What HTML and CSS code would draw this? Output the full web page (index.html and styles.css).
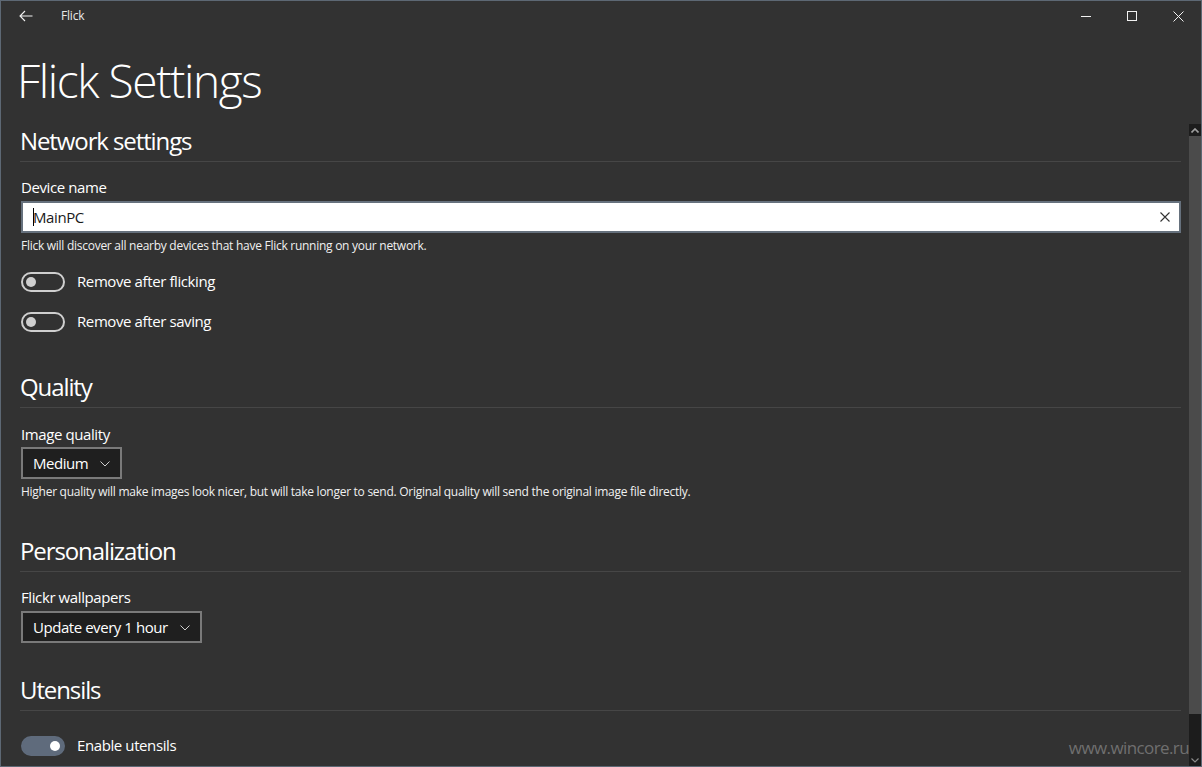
FILE: index.html
```html
<!DOCTYPE html>
<html lang="en">
<head>
<meta charset="utf-8">
<title>Flick</title>
<link rel="stylesheet" href="styles.css">
</head>
<body>
<div class="window">
  <header class="titlebar">
    <div class="tb-left">
      <span class="back-btn">
        <svg width="14" height="12" viewBox="0 0 14 12"><path d="M13.5 6H1M6 1L1 6l5 5" fill="none" stroke="#f2f2f2" stroke-width="1.1"/></svg>
      </span>
      <span class="app-title">Flick</span>
    </div>
    <div class="tb-controls">
      <span class="tb-btn"><svg width="10" height="10" viewBox="0 0 10 10"><path d="M0 5.5H10" stroke="#f2f2f2" stroke-width="1"/></svg></span>
      <span class="tb-btn"><svg width="10" height="10" viewBox="0 0 10 10"><rect x="0.5" y="0.5" width="9" height="9" fill="none" stroke="#f2f2f2" stroke-width="1"/></svg></span>
      <span class="tb-btn"><svg width="11" height="11" viewBox="0 0 11 11"><path d="M0.5 0.5L10.5 10.5M10.5 0.5L0.5 10.5" stroke="#f2f2f2" stroke-width="1"/></svg></span>
    </div>
  </header>
  <div class="frame">
    <main class="content">
      <h1 class="page-title">Flick Settings</h1>

      <h2 class="group-title gt-network">Network settings</h2>
      <div class="field-label fl-device">Device name</div>
      <div class="textbox">
        <span class="caret"></span>
        <span class="tb-value">MainPC</span>
        <svg class="tb-clear" width="10" height="10" viewBox="0 0 10 10"><path d="M0.5 0.5L9.5 9.5M9.5 0.5L0.5 9.5" stroke="#333" stroke-width="1.1"/></svg>
      </div>
      <p class="help help-device">Flick will discover all nearby devices that have Flick running on your network.</p>
      <div class="toggle-row tr-first">
        <span class="toggle"><span class="knob"></span></span>
        <span class="toggle-label">Remove after flicking</span>
      </div>
      <div class="toggle-row tr-second">
        <span class="toggle"><span class="knob"></span></span>
        <span class="toggle-label">Remove after saving</span>
      </div>

      <h2 class="group-title gt-quality">Quality</h2>
      <div class="field-label fl-quality">Image quality</div>
      <div class="combo cb-quality">
        <span>Medium</span>
        <svg width="10" height="6" viewBox="0 0 10 6"><path d="M0.5 0.5L5 5L9.5 0.5" fill="none" stroke="#cfcfcf" stroke-width="1"/></svg>
      </div>
      <p class="help help-quality">Higher quality will make images look nicer, but will take longer to send. Original quality will send the original image file directly.</p>

      <h2 class="group-title gt-personal">Personalization</h2>
      <div class="field-label fl-wall">Flickr wallpapers</div>
      <div class="combo cb-wall">
        <span>Update every 1 hour</span>
        <svg width="10" height="6" viewBox="0 0 10 6"><path d="M0.5 0.5L5 5L9.5 0.5" fill="none" stroke="#cfcfcf" stroke-width="1"/></svg>
      </div>

      <h2 class="group-title gt-utensils">Utensils</h2>
      <div class="toggle-row tr-utensils">
        <span class="toggle toggle-on"><span class="knob"></span></span>
        <span class="toggle-label">Enable utensils</span>
      </div>
    </main>
    <div class="scrollbar">
      <div class="sb-arrow sb-up">
        <svg width="8" height="5" viewBox="0 0 8 5"><path d="M0.5 4.5L4 1L7.5 4.5" fill="none" stroke="#a0a0a0" stroke-width="1.6"/></svg>
      </div>
      <div class="sb-thumb"></div>
      <div class="sb-track">
        <svg width="8" height="5" viewBox="0 0 8 5"><path d="M0.5 0.5L4 4L7.5 0.5" fill="none" stroke="#8a8a8a" stroke-width="1.2"/></svg>
      </div>
    </div>
  </div>
  <div class="watermark">www.wincore.ru</div>
</div>
</body>
</html>
```
FILE: styles.css
```css
* { box-sizing: border-box; }
html, body { margin: 0; padding: 0; background: #323232; }
body {
  font-family: "Open Sans", "Noto Sans", "DejaVu Sans", sans-serif;
  color: #ffffff;
}
.window {
  position: relative;
  width: 1202px;
  height: 767px;
  border: 1px solid #5d6874;
  background: #323232;
  overflow: hidden;
  display: flex;
  flex-direction: column;
}
.titlebar {
  height: 31px;
  display: flex;
  justify-content: space-between;
  align-items: stretch;
  flex: none;
}
.tb-left { display: flex; align-items: center; }
.back-btn {
  width: 48px;
  display: flex;
  align-items: center;
  justify-content: center;
  padding-left: 2px;
  padding-bottom: 2px;
}
.back-btn svg { display: block; }
.app-title {
  margin-left: 12px;
  font-size: 12px;
  line-height: 16px;
  color: #e8e8e8;
  padding-bottom: 2px;
  letter-spacing: -0.2px;
}
.tb-controls { display: flex; }
.tb-btn {
  width: 46px;
  display: flex;
  align-items: center;
  justify-content: center;
  padding-bottom: 1px;
}
.tb-btn svg { display: block; }

.frame {
  flex: 1;
  display: flex;
  min-height: 0;
}
.content {
  flex: 1;
  padding: 0 8px 0 19px;
  min-width: 0;
}
.page-title {
  margin: 20px 0 0 -3px;
  font-size: 46px;
  line-height: 56px;
  font-weight: 300;
  letter-spacing: -1.4px;
}
.group-title {
  margin: 0;
  font-size: 24px;
  line-height: 32px;
  font-weight: 400;
  padding-bottom: 4px;
  border-bottom: 1px solid #464646;
  letter-spacing: -1.1px;
}
.gt-network { margin-top: 17px; }
.gt-quality { margin-top: 39px; }
.gt-personal { margin-top: 35px; }
.gt-utensils { margin-top: 31px; }

.field-label {
  font-size: 15px;
  line-height: 20px;
  margin-left: 1px;
  letter-spacing: -0.4px;
}
.fl-device { margin-top: 15px; }
.fl-quality { margin-top: 16px; }
.fl-wall { margin-top: 15px; }

.textbox {
  margin: 4px 0 0 1px;
  height: 32px;
  background: #ffffff;
  border: 2px solid #66717d;
  display: flex;
  align-items: center;
  padding: 0 9px 0 10px;
  color: #1a1a1a;
  font-size: 15px;
  line-height: 20px;
  letter-spacing: -0.4px;
}
.caret {
  width: 1px;
  height: 18px;
  background: #000;
  margin-right: -1px;
}
.tb-value { flex: 1; }
.tb-clear { display: block; }

.help {
  margin: 0 0 0 1px;
  font-size: 12px;
  line-height: 16px;
  color: #f0f0f0;
  letter-spacing: -0.27px;
}
.help-device { margin-top: 5px; }
.help-quality { margin-top: 5px; }

.toggle-row {
  display: flex;
  align-items: center;
  height: 20px;
  margin-left: 1px;
}
.tr-first { margin-top: 18px; }
.tr-second { margin-top: 20px; }
.tr-utensils { margin-top: 25px; }
.toggle {
  width: 44px;
  height: 20px;
  border-radius: 10px;
  border: 2px solid #cfcfcf;
  display: flex;
  align-items: center;
  padding: 0 3px;
  flex: none;
}
.knob {
  width: 10px;
  height: 10px;
  border-radius: 50%;
  background: #cfcfcf;
}
.toggle-on {
  background: #5f6b7c;
  border-color: #5f6b7c;
  justify-content: flex-end;
}
.toggle-on .knob { background: #ffffff; }
.toggle-label {
  margin-left: 12px;
  font-size: 15px;
  line-height: 20px;
  padding-bottom: 2px;
  letter-spacing: -0.4px;
}

.combo {
  display: inline-flex;
  align-items: center;
  gap: 12px;
  height: 32px;
  border: 2px solid #7a7a7a;
  background: #1f1f1f;
  padding: 0 10px;
  margin-left: 1px;
  font-size: 15px;
  line-height: 20px;
  letter-spacing: -0.45px;
}
.combo span { padding-bottom: 1px; }
.combo svg { display: block; margin-top: 1px; }
.cb-quality { margin-top: 3px; }
.cb-wall { margin-top: 4px; }

.scrollbar {
  width: 12px;
  flex: none;
  margin-top: 92px;
  display: flex;
  flex-direction: column;
}
.sb-arrow, .sb-track {
  background: #1c1c1c;
  display: flex;
  justify-content: center;
}
.sb-up { height: 12px; align-items: center; }
.sb-thumb { height: 578px; background: #4b4b4b; }
.sb-track { flex: 1; align-items: flex-end; padding-bottom: 3px; }
.sb-arrow svg, .sb-track svg { display: block; }

.watermark {
  position: absolute;
  right: 12px;
  bottom: 7px;
  font-size: 17px;
  line-height: 22px;
  color: #6f6f6f;
  letter-spacing: -0.6px;
}
```
